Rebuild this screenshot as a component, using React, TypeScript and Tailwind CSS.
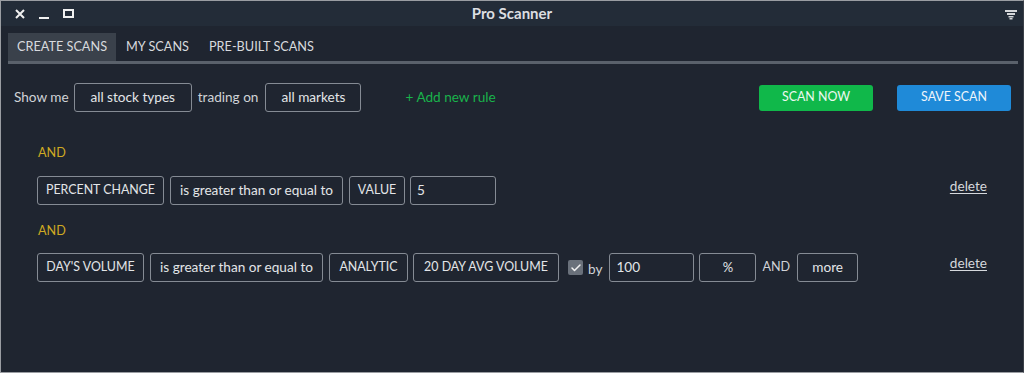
import { Check } from 'lucide-react';

function Box({ children, className = '' }: { children: React.ReactNode; className?: string }) {
  return (
    <div
      className={`h-[29px] flex items-center justify-center rounded-[3px] border border-[#858b94] text-[#e3e5e8] ${className}`}
    >
      {children}
    </div>
  );
}

function Input({ value, className = '' }: { value: string; className?: string }) {
  return (
    <div
      className={`h-[29px] flex items-center px-[6px] rounded-[3px] border border-[#858b94] text-[13.6px] text-[#e3e5e8] ${className}`}
    >
      {value}
    </div>
  );
}

function FilterIcon() {
  return (
    <svg width="12" height="10" viewBox="0 0 12 10" className="fill-[#d4d6d9]">
      <rect x="0" y="0" width="12" height="2" />
      <rect x="2" y="3" width="8" height="2" />
      <rect x="3.5" y="6" width="5" height="1.5" />
      <rect x="4.5" y="8" width="3" height="1.5" />
    </svg>
  );
}

export default function App() {
  return (
    <div className="w-[1024px] h-[373px] bg-[#1f2530] border border-[#9a9da2] border-r-[#3a3f47] flex flex-col font-['Lato',sans-serif] overflow-hidden">
      {/* title bar */}
      <div className="h-[25px] bg-[#232c38] flex items-center relative shrink-0">
        <div className="flex items-center gap-[14px] pl-[14px] text-[#f0f0f0]">
          <svg width="10" height="10" viewBox="0 0 10 10" className="stroke-[#f0f0f0]" strokeWidth="2">
            <path d="M1 1L9 9M9 1L1 9" />
          </svg>
          <svg width="10" height="10" viewBox="0 0 10 10" className="stroke-[#f0f0f0]" strokeWidth="2">
            <path d="M0 9H10" />
          </svg>
          <svg width="11" height="10" viewBox="0 0 11 10" className="stroke-[#f0f0f0]" fill="none" strokeWidth="2">
            <rect x="1" y="1" width="9" height="7" />
          </svg>
        </div>
        <div className="absolute inset-0 flex items-center justify-center text-[15px] font-bold text-[#dcdee1] pointer-events-none">
          Pro Scanner
        </div>
        <div className="ml-auto pr-[6px] pt-[2px]">
          <FilterIcon />
        </div>
      </div>

      {/* tabs */}
      <div className="px-[7px] pt-[7px]">
        <div className="flex items-stretch h-[28px] text-[12.7px] text-[#d8dade]">
          <div className="bg-[#3a414b] px-[9px] flex items-center">CREATE SCANS</div>
          <div className="px-[10px] flex items-center">MY SCANS</div>
          <div className="px-[10px] flex items-center">PRE-BUILT SCANS</div>
        </div>
        <div className="h-[3px] bg-[#5a616b] mr-[-2px]" />
      </div>

      {/* controls */}
      <div className="flex items-center pl-[13px] pr-[12px] mt-[19px] text-[13.6px] text-[#d0d3d7]">
        <span>Show me</span>
        <Box className="ml-[5px] w-[118px] text-[13.6px]">all stock types</Box>
        <span className="ml-[6px]">trading on</span>
        <Box className="ml-[7px] w-[96px] text-[13.6px]">all markets</Box>
        <span className="ml-[44px] text-[#19b34b]">+ Add new rule</span>
        <div className="ml-auto flex gap-[24px]">
          <div className="w-[114px] h-[26px] rounded-[3px] bg-[#10b84a] flex items-center justify-center text-[12.4px] text-[#eef8f1]">
            SCAN NOW
          </div>
          <div className="w-[114px] h-[26px] rounded-[3px] bg-[#1f8ad8] flex items-center justify-center text-[12.4px] text-[#eef5fb]">
            SAVE SCAN
          </div>
        </div>
      </div>

      {/* rules */}
      <div className="pl-[36px] pr-[36px] mt-[33px] flex flex-col">
        <div className="pl-[1px] text-[12.6px] text-[#cfaa22] leading-[16px]">AND</div>
        <div className="flex items-center gap-[6px] mt-[15px]">
          <Box className="w-[127px] text-[12.4px]">PERCENT CHANGE</Box>
          <Box className="w-[173px] text-[13.6px]">is greater than or equal to</Box>
          <Box className="w-[56px] text-[12.4px]">VALUE</Box>
          <Input value="5" className="ml-[-1px] w-[86px]" />
          <span className="ml-auto text-[13.6px] text-[#d5d8dc] underline underline-offset-2 self-start">delete</span>
        </div>

        <div className="pl-[1px] text-[12.6px] text-[#cfaa22] leading-[16px] mt-[18px]">AND</div>
        <div className="flex items-center gap-[6px] mt-[14px]">
          <Box className="w-[107px] text-[12.4px]">DAY'S VOLUME</Box>
          <Box className="w-[173px] text-[13.6px]">is greater than or equal to</Box>
          <Box className="w-[79px] text-[12.4px]">ANALYTIC</Box>
          <Box className="ml-[-1px] w-[146px] text-[12.4px]">20 DAY AVG VOLUME</Box>
          <div className="ml-[3px] w-[15px] h-[15px] bg-[#6a717b] rounded-[2px] flex items-center justify-center">
            <Check size={12} strokeWidth={3} className="text-[#f2f2f2]" />
          </div>
          <span className="ml-[-1px] text-[13.6px] text-[#d0d3d7] mt-[3px]">by</span>
          <Input value="100" className="ml-[1px] w-[85px]" />
          <Box className="ml-[-1px] w-[57px] text-[13px]">%</Box>
          <span className="text-[12.6px] text-[#d0d3d7]">AND</span>
          <Box className="ml-[1px] w-[61px] text-[13.6px]">more</Box>
          <span className="ml-auto text-[13.6px] text-[#d5d8dc] underline underline-offset-2 self-start">delete</span>
        </div>
      </div>
    </div>
  );
}
